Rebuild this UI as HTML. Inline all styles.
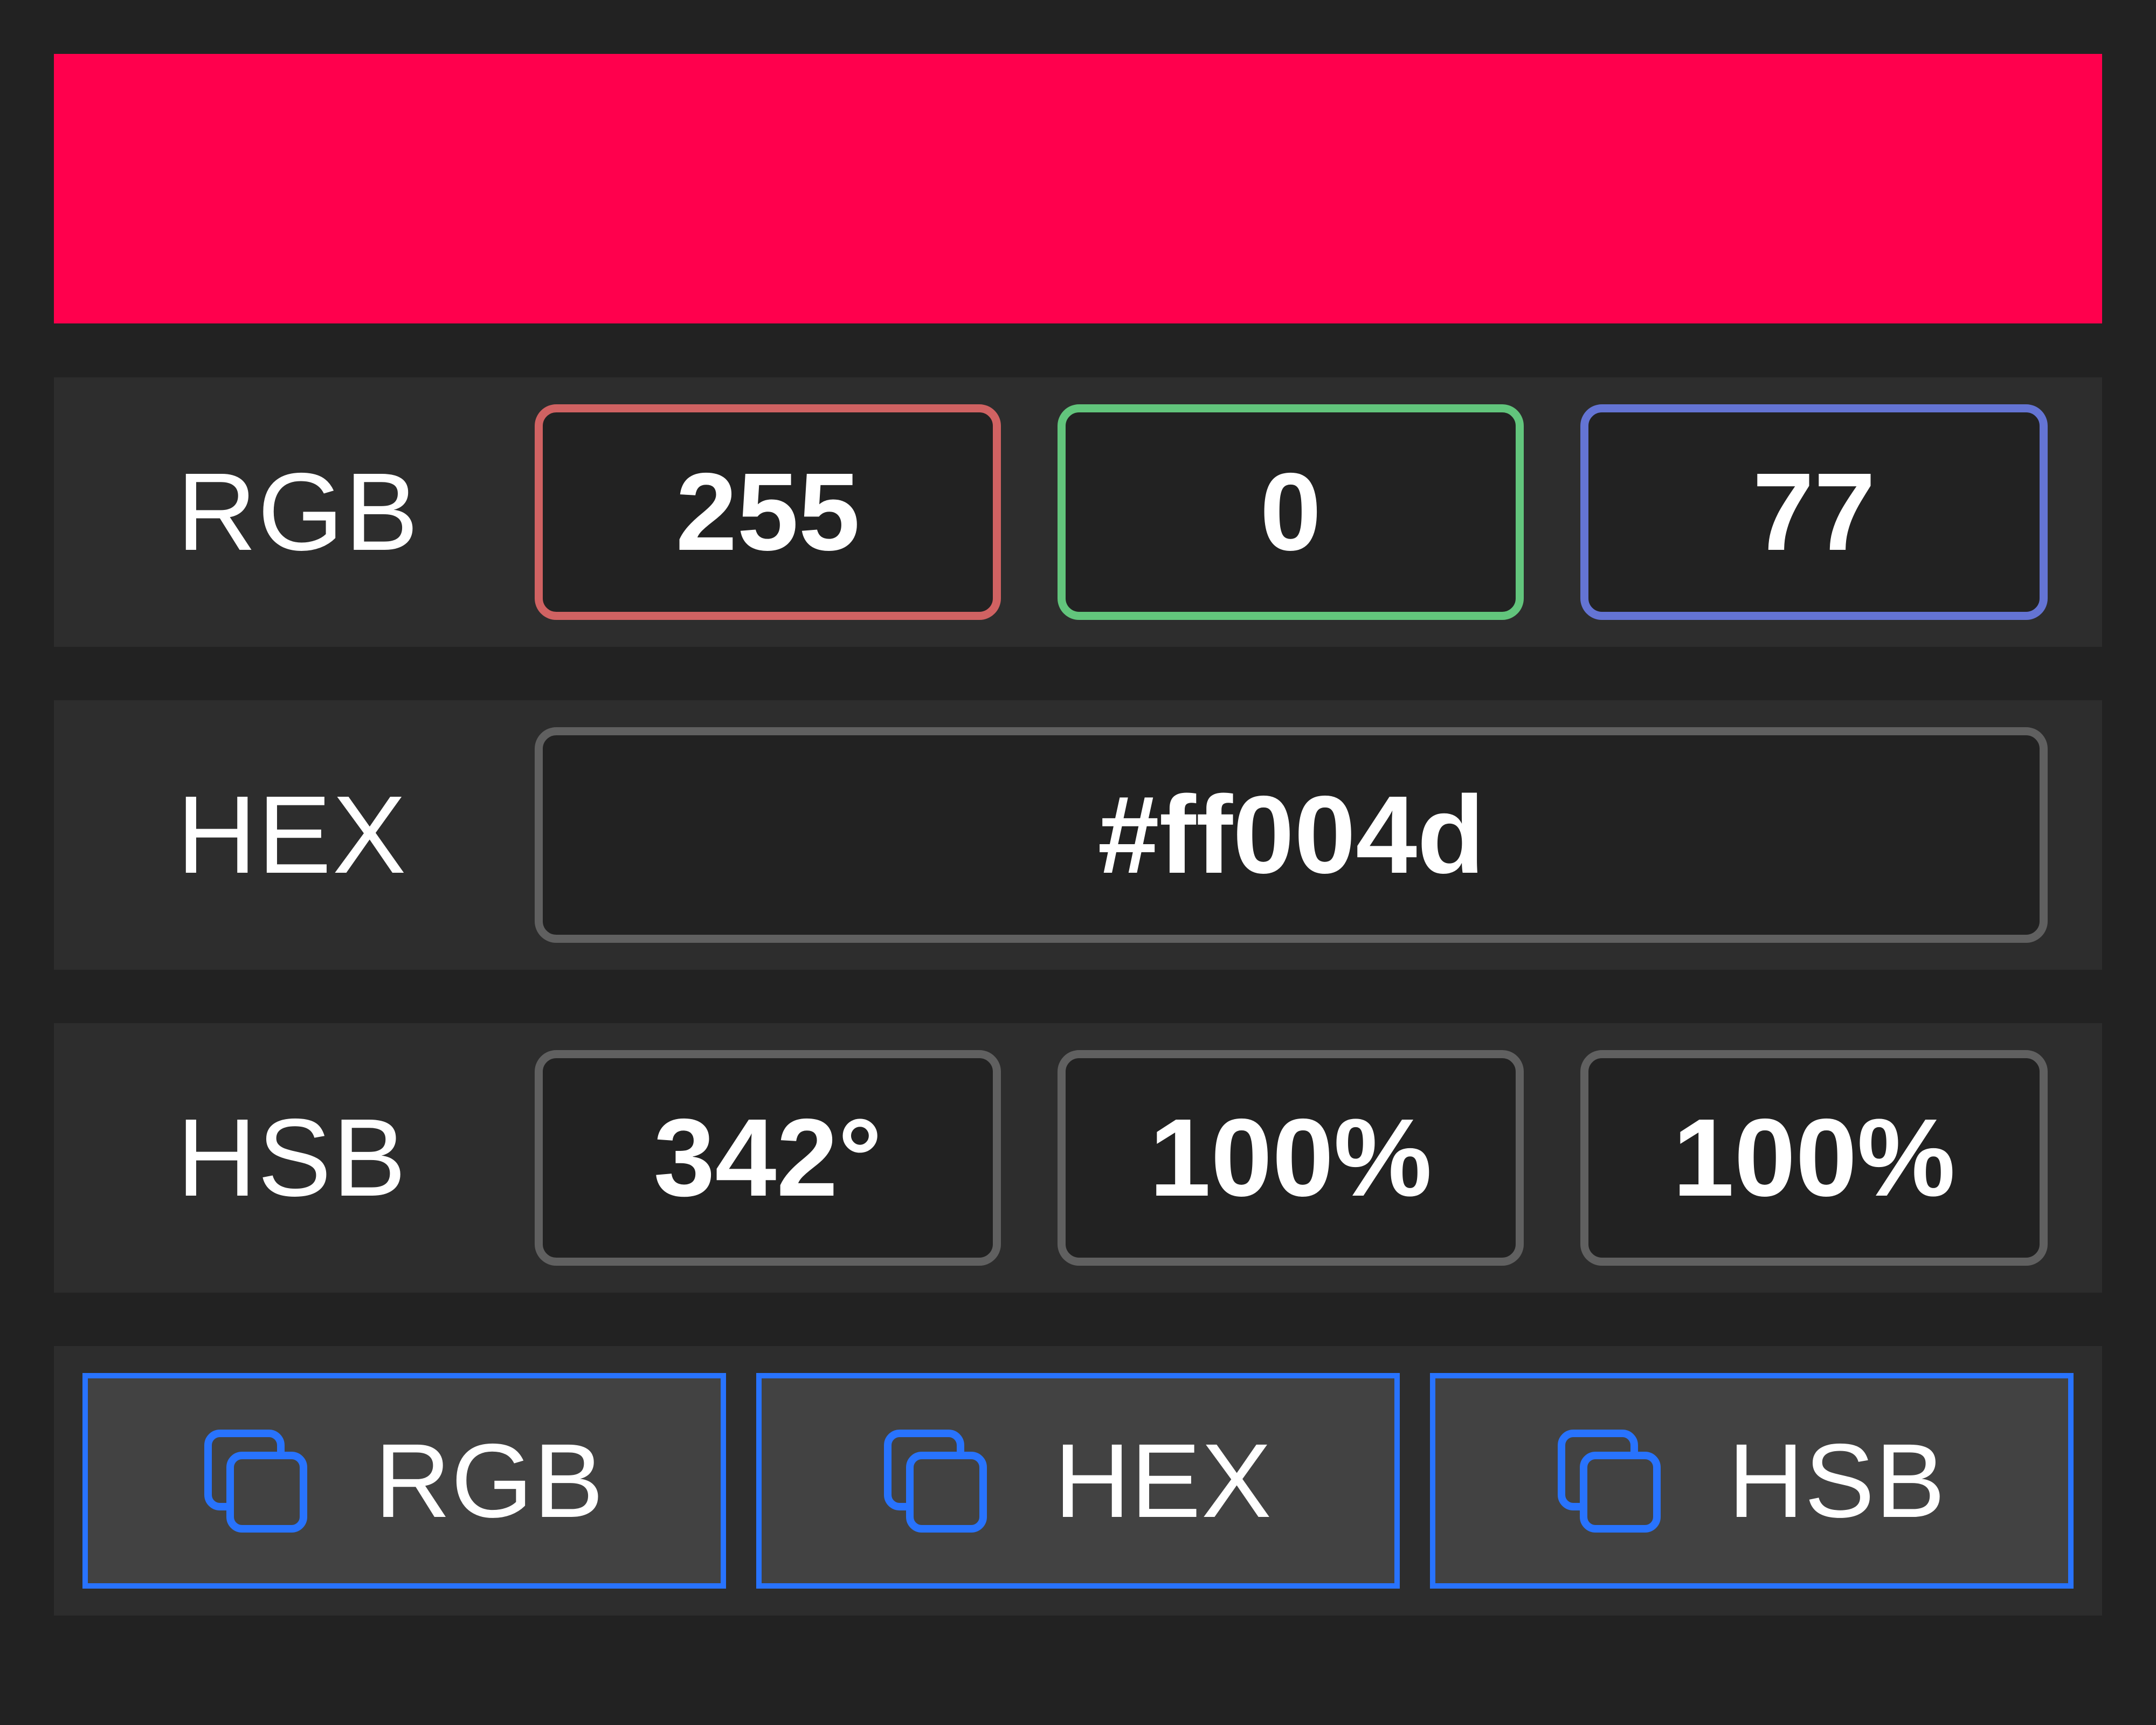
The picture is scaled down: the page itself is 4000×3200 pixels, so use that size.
<!DOCTYPE html>
<html><head><style>
*{margin:0;padding:0;box-sizing:border-box}
body{width:4000px;height:3200px;background:#222;position:relative;overflow:hidden;font-family:"Liberation Sans",sans-serif;color:#fff}
.a{position:absolute}
.bar{left:100px;top:100px;width:3800px;height:500px;background:#ff004d}
.panel{left:100px;width:3800px;height:500px;background:#2d2d2d}
.lbl{left:228px;top:0;width:560px;height:500px;display:flex;align-items:center;font-size:205px;font-weight:normal;letter-spacing:2px}
.box{height:400px;border:15px solid #606060;border-radius:40px;background:#222;display:flex;align-items:center;justify-content:center;font-size:205px;font-weight:bold}
.btn{top:50px;width:1194px;height:400px;border:10px solid #2873fe;background:#424242;display:flex;align-items:center;justify-content:center;font-size:195px;letter-spacing:1px}
.btn svg{margin-right:125px}
</style></head><body>
<div class="a bar"></div>

<div class="a panel" style="top:700px">
  <div class="a lbl">RGB</div>
  <div class="a box" style="left:892px;top:50px;width:865px;border-color:#d06262">255</div>
  <div class="a box" style="left:1862px;top:50px;width:865px;border-color:#62c57c">0</div>
  <div class="a box" style="left:2832px;top:50px;width:867px;border-color:#6474d4">77</div>
</div>

<div class="a panel" style="top:1299px">
  <div class="a lbl">HEX</div>
  <div class="a box" style="left:892px;top:50px;width:2807px">#ff004d</div>
</div>

<div class="a panel" style="top:1898px">
  <div class="a lbl">HSB</div>
  <div class="a box" style="left:892px;top:50px;width:865px">342°</div>
  <div class="a box" style="left:1862px;top:50px;width:865px">100%</div>
  <div class="a box" style="left:2832px;top:50px;width:867px">100%</div>
</div>

<div class="a panel" style="top:2497px">
  <div class="a btn" style="left:53px"><svg width="191" height="191" viewBox="0 0 191 191"><rect x="7" y="7" width="135" height="136" rx="22" fill="none" stroke="#2873fe" stroke-width="14"/><rect x="48" y="48" width="136" height="136" rx="22" fill="#424242" stroke="#2873fe" stroke-width="14"/></svg>RGB</div>
  <div class="a btn" style="left:1303px"><svg width="191" height="191" viewBox="0 0 191 191"><rect x="7" y="7" width="135" height="136" rx="22" fill="none" stroke="#2873fe" stroke-width="14"/><rect x="48" y="48" width="136" height="136" rx="22" fill="#424242" stroke="#2873fe" stroke-width="14"/></svg>HEX</div>
  <div class="a btn" style="left:2553px"><svg width="191" height="191" viewBox="0 0 191 191"><rect x="7" y="7" width="135" height="136" rx="22" fill="none" stroke="#2873fe" stroke-width="14"/><rect x="48" y="48" width="136" height="136" rx="22" fill="#424242" stroke="#2873fe" stroke-width="14"/></svg>HSB</div>
</div>
</body></html>
